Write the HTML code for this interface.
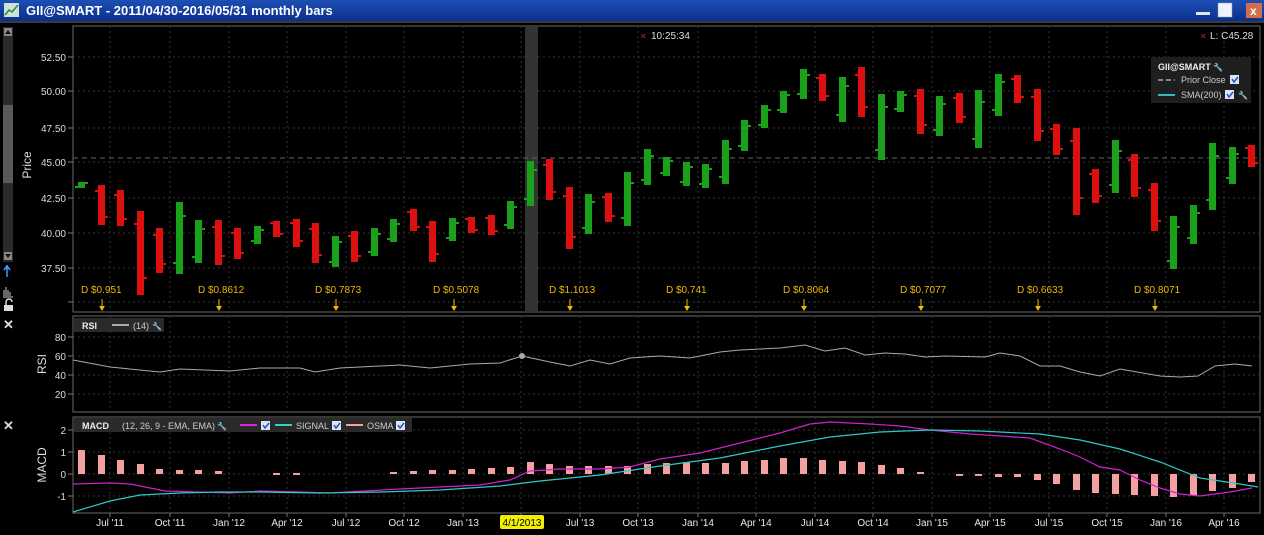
<!DOCTYPE html>
<html><head><meta charset="utf-8"><style>
html,body{margin:0;padding:0;background:#000;width:1264px;height:535px;overflow:hidden;font-family:"Liberation Sans",sans-serif}
svg{display:block}
</style></head><body>
<svg id="s" width="1264" height="535" xmlns="http://www.w3.org/2000/svg" font-family="Liberation Sans, sans-serif">
<defs><linearGradient id="tb" x1="0" y1="0" x2="0" y2="1"><stop offset="0" stop-color="#1d4fb5"/><stop offset="1" stop-color="#0b2f8c"/></linearGradient></defs>
<rect x="0" y="0" width="1264" height="21" fill="url(#tb)"/>
<rect x="0" y="21" width="1264" height="2" fill="#3a3a3a"/>
<rect x="4" y="3" width="15" height="14" fill="#cfe0d8"/><path d="M5 15 L9 10 L12 12 L18 5" stroke="#2a8a3a" stroke-width="1.5" fill="none"/>
<text x="26" y="15" fill="#fff" font-size="13" font-weight="bold">GII@SMART - 2011/04/30-2016/05/31 monthly bars</text>
<rect x="1196" y="12" width="14" height="3" fill="#dfe7f5"/>
<rect x="1218" y="3" width="14" height="14" fill="#eef2fa" stroke="#8aa" stroke-width="0.5"/>
<rect x="1246" y="3" width="16" height="15" fill="#d0704a"/><text x="1250" y="15" fill="#fff" font-size="12" font-weight="bold">x</text>
<rect x="3" y="27" width="10" height="235" fill="#2b2b2b"/>
<rect x="3" y="105" width="10" height="78" fill="#5a5a5a"/>
<rect x="4" y="28" width="8" height="8" fill="#888"/><path d="M5 34 L8 30 L11 34Z" fill="#111"/>
<rect x="4" y="252" width="8" height="8" fill="#888"/><path d="M5 254 L8 258 L11 254Z" fill="#111"/>
<path d="M7 265 v12 M4 270 l3 -4 l3 4" stroke="#3aa0ff" stroke-width="1.5" fill="none"/>
<path d="M4 296 v-6 M6 296 v-9 M8 296 v-6 M10 296 v-4 M3 297 h10" stroke="#ccc" stroke-width="1"/>
<rect x="4" y="305" width="9" height="6" fill="#ddd"/><path d="M6 305 v-3 a3 3 0 0 1 6 0" stroke="#ddd" fill="none" stroke-width="1.5"/>
<text x="3" y="329" fill="#ddd" font-size="13" font-weight="bold">✕</text>
<text x="3" y="430" fill="#ddd" font-size="13" font-weight="bold">✕</text>
<g id="g"></g>
</svg>
<script>
var S=document.getElementById('g'),h='';
function R(x,y,w,hh,f,extra){h+='<rect x="'+x+'" y="'+y+'" width="'+w+'" height="'+hh+'" fill="'+f+'" '+(extra||'')+'/>';}
function L(x1,y1,x2,y2,c,extra){h+='<line x1="'+x1+'" y1="'+y1+'" x2="'+x2+'" y2="'+y2+'" stroke="'+c+'" '+(extra||'')+'/>';}
function T(x,y,t,c,sz,extra){h+='<text x="'+x+'" y="'+y+'" fill="'+c+'" font-size="'+sz+'" '+(extra||'')+'>'+t+'</text>';}
function P(pts,c,w){h+='<polyline fill="none" stroke="'+c+'" stroke-width="'+w+'" points="'+pts.map(function(p){return p.join(',')}).join(' ')+'"/>';}
function CB(x,y){R(x,y,9,9,'#dde4f4');h+='<path d="M'+(x+2)+' '+(y+4)+' l2 3 l4 -5" stroke="#2050c0" stroke-width="1.5" fill="none"/>';}
var L0=73,R0=1260;
var panels=[[26,312],[316,412],[417,513]];
panels.forEach(function(p){R(L0,p[0],R0-L0,p[1]-p[0],'none','stroke="#6a6a6a" stroke-width="1"');});
var xs=[[110,"Jul '11"],[170,"Oct '11"],[229,"Jan '12"],[287,"Apr '12"],[346,"Jul '12"],[404,"Oct '12"],[463,"Jan '13"],[521,""],[580,"Jul '13"],[638,"Oct '13"],[698,"Jan '14"],[756,"Apr '14"],[815,"Jul '14"],[873,"Oct '14"],[932,"Jan '15"],[990,"Apr '15"],[1049,"Jul '15"],[1107,"Oct '15"],[1166,"Jan '16"],[1224,"Apr '16"]];
var gd='stroke-dasharray="2,3" stroke-width="1"';
xs.forEach(function(a){panels.forEach(function(p){L(a[0],p[0],a[0],p[1],'#333',gd);});L(a[0],513,a[0],517,'#777');if(a[1])T(a[0],526,a[1],'#e8e8e8',10,'text-anchor="middle"');});
R(525,27,13,285,'#333');
var py=[[57,'52.50'],[91,'50.00'],[128,'47.50'],[162,'45.00'],[198,'42.50'],[233,'40.00'],[268,'37.50'],[302,'']];
py.forEach(function(a){L(L0,a[0],R0,a[0],'#333',gd);L(68,a[0],73,a[0],'#777');if(a[1])T(66,a[0]+4,a[1],'#ddd',10,'text-anchor="end"');});
L(L0,158,R0,158,'#666','stroke-dasharray="5,4"');
T(31,165,'Price','#ddd',12,'text-anchor="middle" transform="rotate(-90 31 165)"');
var b=[[182,188,1],[185,225,0],[190,226,0],[211,295,0],[228,273,0],[202,274,1],[220,263,1],[220,265,0],[228,259,0],[226,244,1],[221,237,0],[219,247,0],[223,263,0],[236,267,1],[231,262,0],[228,256,1],[219,242,1],[209,231,0],[221,262,0],[218,241,1],[217,233,0],[215,235,0],[201,229,1],[161,206,1],[159,200,0],[187,249,0],[194,234,1],[193,222,0],[172,226,1],[149,185,1],[157,176,1],[162,186,1],[164,188,1],[140,184,1],[120,151,1],[105,128,1],[91,113,1],[69,99,1],[74,101,0],[77,122,1],[67,117,0],[94,160,1],[91,112,1],[89,134,0],[96,136,1],[93,123,0],[90,148,1],[74,116,1],[75,103,0],[89,141,0],[124,155,0],[128,215,0],[169,203,0],[140,193,1],[154,197,0],[183,231,0],[216,269,1],[205,244,1],[143,210,1],[147,184,1],[145,167,0]];
b.forEach(function(v,i){var x=Math.round(81+i*19.5);var c=v[2]?'#1aa01a':'#dd1010';var op,cl;var r=v[1]-v[0];
if(v[2]){op=v[1]-Math.round(r*0.15);cl=v[0]+Math.round(r*0.2);}else{op=v[0]+Math.round(r*0.15);cl=v[1]-Math.round(r*0.2);}
R(x-3,v[0],7,r,c);R(x-6,op-1,3,2,c);R(x+4,cl-1,3,2,c);});
var dv=[[102,'D $0.951'],[219,'D $0.8612'],[336,'D $0.7873'],[454,'D $0.5078'],[570,'D $1.1013'],[687,'D $0.741'],[804,'D $0.8064'],[921,'D $0.7077'],[1038,'D $0.6633'],[1155,'D $0.8071']];
dv.forEach(function(a){T(a[0]-21,293,a[1],'#f0b800',10);L(a[0],299,a[0],308,'#f0b800','stroke-width="1"');h+='<path d="M'+(a[0]-3)+' 306 L'+(a[0]+3)+' 306 L'+a[0]+' 311Z" fill="#f0b800"/>';});
T(640,39,'✕','#a03030',8);T(651,39,'10:25:34','#ddd',10);
T(1200,39,'✕','#a03030',8);T(1210,39,'L: C45.28','#ddd',10);
R(1151,57,100,46,'#1e1e1e');
T(1158,70,'GII@SMART','#eee',9,'font-weight="bold"');T(1213,70,'🔧','#8ac',8);
L(1158,80,1175,80,'#888','stroke-dasharray="5,3" stroke-width="2"');T(1181,83,'Prior Close','#ccc',9);CB(1230,75);
L(1158,95,1175,95,'#3bb','stroke-width="2"');T(1181,98,'SMA(200)','#ccc',9);CB(1225,90);T(1238,98,'🔧','#8ac',8);
[[337,'80'],[356,'60'],[375,'40'],[394,'20']].forEach(function(a){L(L0,a[0],R0,a[0],'#333',gd);L(68,a[0],73,a[0],'#777');T(66,a[0]+4,a[1],'#ddd',10,'text-anchor="end"');});
T(46,364,'RSI','#ddd',12,'text-anchor="middle" transform="rotate(-90 46 364)"');
P([[73,360],[110,367],[160,372],[180,369],[230,371],[260,368],[300,368],[315,372],[340,368],[400,365],[430,368],[470,364],[500,363],[522,356],[550,362],[570,366],[590,360],[610,364],[630,358],[660,356],[690,358],[720,352],[740,350],[780,348],[805,345],[825,351],[845,348],[865,355],[885,353],[905,354],[925,357],[945,356],[985,357],[1000,353],[1020,356],[1040,366],[1060,366],[1080,372],[1100,376],[1120,369],[1160,376],[1180,377],[1198,376],[1215,366],[1235,364],[1252,366]],'#aaa',1);
h+='<circle cx="522" cy="356" r="3" fill="#aaa"/>';
R(74,318,90,14,'#2a2a2a');T(82,329,'RSI','#eee',9,'font-weight="bold"');L(112,325,129,325,'#aaa','stroke-width="2"');T(133,329,'(14)','#ccc',9);T(152,329,'🔧','#8ac',8);
[[430,'2'],[452,'1'],[474,'0'],[496,'-1']].forEach(function(a){L(L0,a[0],R0,a[0],'#333',gd);L(68,a[0],73,a[0],'#777');T(66,a[0]+4,a[1],'#ddd',10,'text-anchor="end"');});
T(46,465,'MACD','#ddd',12,'text-anchor="middle" transform="rotate(-90 46 465)"');
var os=[450,455,460,464,469,470,470,471,474,474,473,473,474,474,474,474,472,471,470,470,469,468,467,462,464,466,466,466,466,464,463,462,463,463,461,460,458,458,460,461,462,465,468,472,474,476,476,477,477,480,484,490,493,494,495,496,497,495,491,488,482];
os.forEach(function(y,i){var x=Math.round(81+i*19.5);if(y==474)return;var t=Math.min(y,474),hh=Math.abs(474-y);R(x-3,t,7,Math.max(hh,2),'#f4a0a0');});
P([[73,484],[110,483],[130,484],[165,491],[230,493],[260,491],[300,492],[330,493],[400,489],[440,487],[480,485],[510,480],[530,471],[560,469],[600,469],[630,467],[660,459],[700,453],[740,443],[780,433],[810,424],[830,422],[870,424],[900,426],[930,430],[970,434],[1000,436],[1030,438],[1060,449],[1080,457],[1100,467],[1120,470],[1140,480],[1160,488],[1180,494],[1200,496],[1230,492],[1252,488]],'#d020d0',1.2);
P([[73,512],[110,501],[140,495],[180,493],[220,492],[260,492],[320,493],[380,492],[440,490],[500,486],[540,481],[600,475],[660,466],[720,458],[780,446],[830,437],[880,432],[930,430],[980,431],[1040,434],[1080,440],[1120,449],[1160,462],[1200,478],[1240,484],[1258,487]],'#30c8c8',1.2);
R(74,418,338,14,'#2a2a2a');T(82,429,'MACD','#eee',9,'font-weight="bold"');T(122,429,'(12, 26, 9 - EMA, EMA)','#ccc',9);T(217,429,'🔧','#8ac',8);
L(240,425,257,425,'#e020e0','stroke-width="2"');CB(261,421);
L(275,425,292,425,'#30d0d0','stroke-width="2"');T(296,429,'SIGNAL','#ccc',9);CB(332,421);
L(346,425,363,425,'#f4a0a0','stroke-width="2"');T(367,429,'OSMA','#ccc',9);CB(396,421);
R(500,515,44,14,'#f0f000','rx="2"');T(522,526,'4/1/2013','#000',10,'text-anchor="middle"');
S.innerHTML=h;
</script>
</body></html>
